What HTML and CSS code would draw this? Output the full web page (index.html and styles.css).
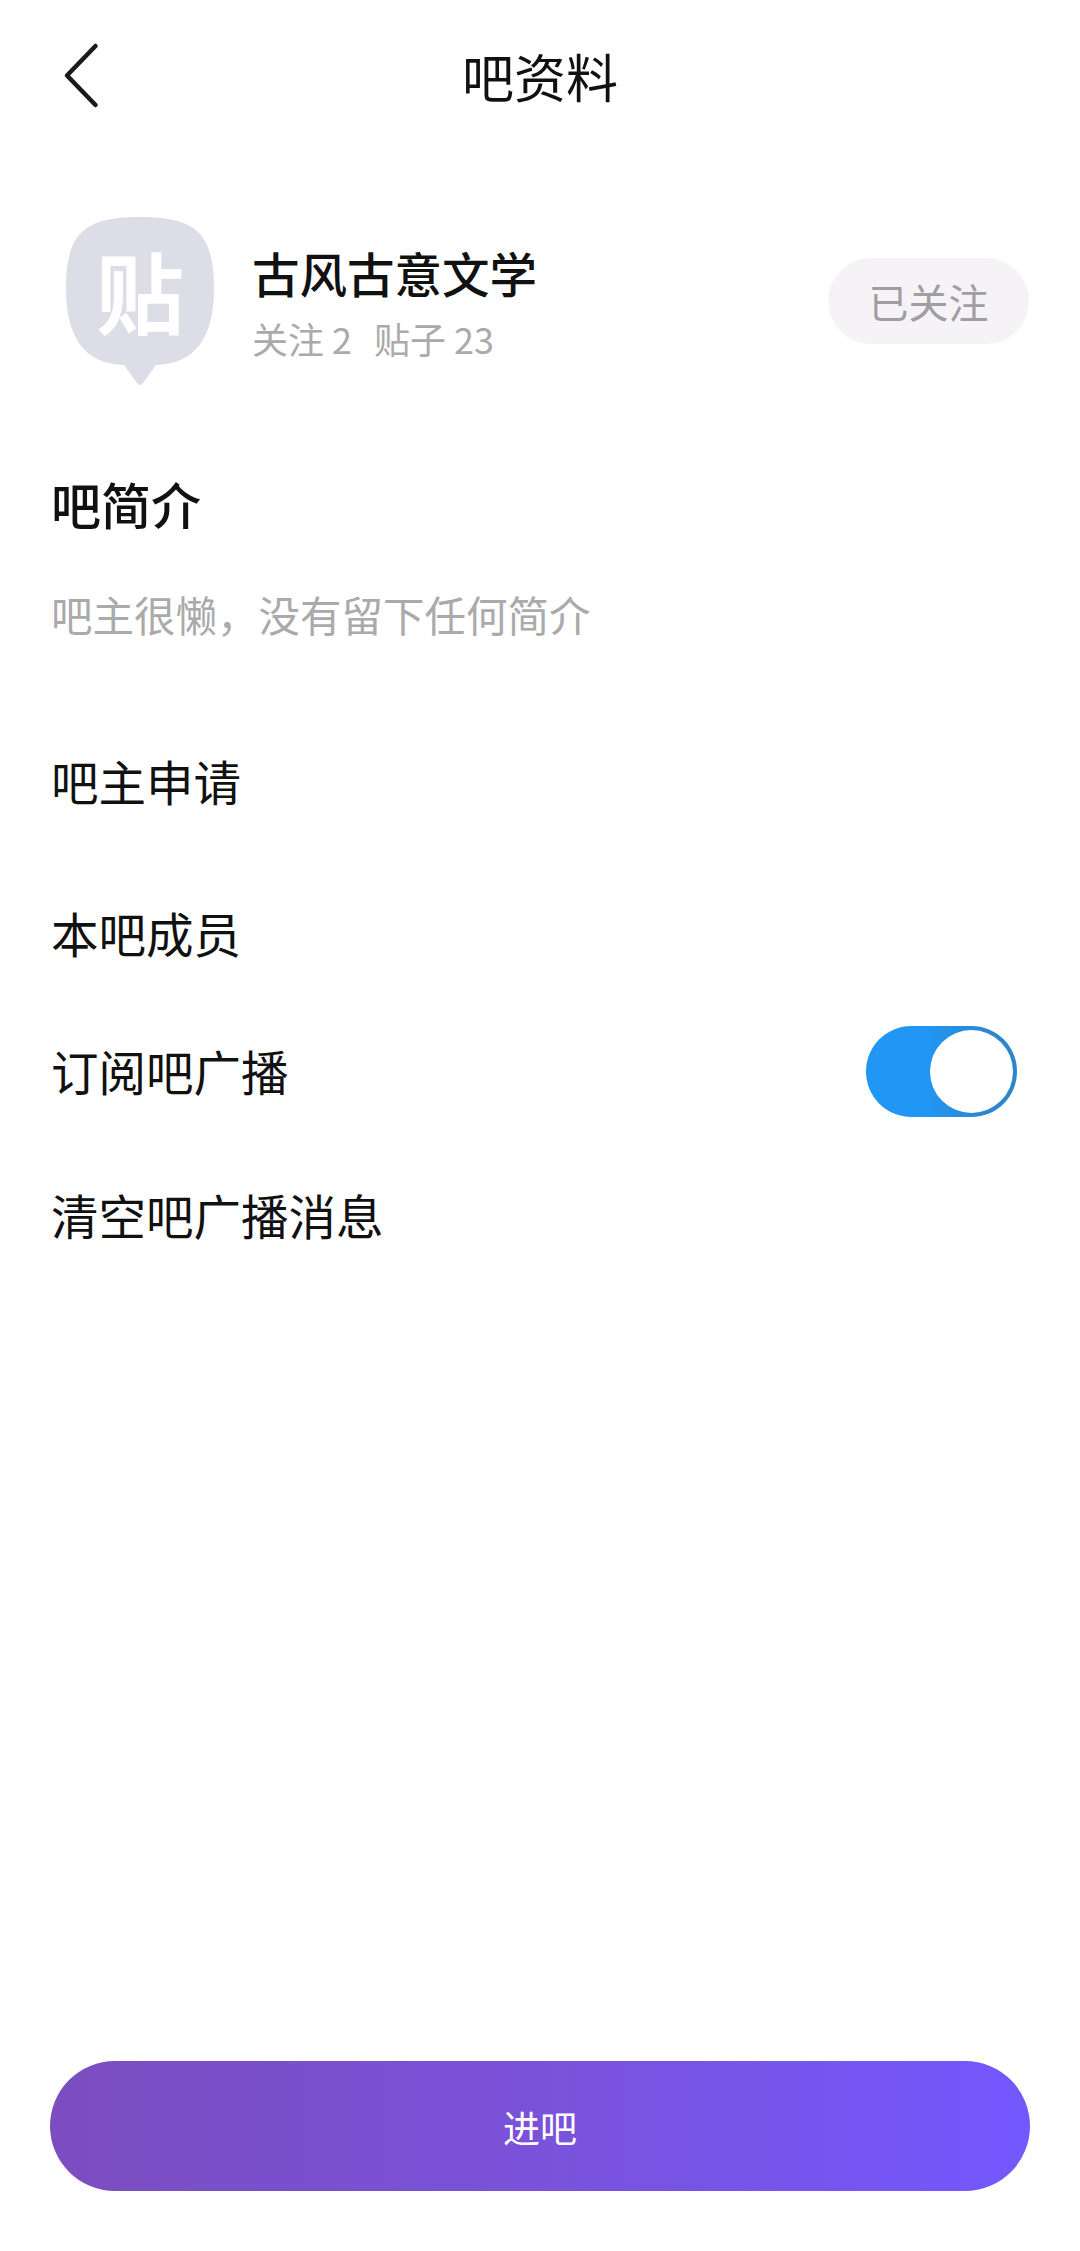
FILE: index.html
```html
<!DOCTYPE html>
<html lang="zh-CN">
<head>
    <meta charset="utf-8">
    <title>吧资料</title>
    <link rel="stylesheet" href="styles.css">
</head>
<body>
    <header class="topbar">
        <svg class="back" width="40" height="70" viewBox="0 0 40 70">
            <path d="M33.500 5 L5 34.500 L33.500 64" fill="none" stroke="#1a1a1a" stroke-width="4.500" stroke-linecap="round" stroke-linejoin="round"/>
        </svg>
        <h1 class="title">吧资料</h1>
    </header>

    <section class="profile">
        <svg class="logo" width="148" height="168" viewBox="0 0 148 168">
            <path d="M74 0 C130 0 148 16 148 72 C148 122 128 147 90 148 L77 166 Q74 170 71 166 L58 148 C20 147 0 122 0 72 C0 16 18 0 74 0 Z" fill="#dcdde6"/>
            <text class="logo-text" x="74" y="110" text-anchor="middle">贴</text>
        </svg>
        <div class="info">
            <div class="name">古风古意文学</div>
            <div class="stats"><span>关注 2</span><span>贴子 23</span></div>
        </div>
        <div class="follow">已关注</div>
    </section>

    <section class="intro">
        <h2 class="intro-title">吧简介</h2>
        <p class="intro-text">吧主很懒，没有留下任何简介</p>
    </section>

    <section class="list">
        <div class="row row-apply">吧主申请</div>
        <div class="row row-members">本吧成员</div>
        <div class="row row-sub">
            <span>订阅吧广播</span>
            <div class="switch"><div class="knob"></div></div>
        </div>
        <div class="row row-clear">清空吧广播消息</div>
    </section>

    <div class="enter">进吧</div>
</body>
</html>
```

FILE: styles.css
```css
* {
    box-sizing: border-box;
}
body {
    margin: 0;
    height: 2251px;
    background: #fff;
    color: #111;
    font-family: "Noto Sans CJK SC", "Noto Sans", sans-serif;
    display: flex;
    flex-direction: column;
    overflow: hidden;
}
.topbar {
    height: 156px;
    padding-bottom: 5px;
    position: relative;
    display: flex;
    align-items: center;
    justify-content: center;
}
.back {
    position: absolute;
    left: 62px;
    top: 41px;
}
.title {
    margin: 0;
    font-size: 52px;
    font-weight: 400;
    line-height: 70px;
}
.profile {
    margin-top: 61px;
    padding: 0 51px 0 66px;
    display: flex;
    align-items: flex-start;
}
.logo {
    flex: none;
}
.logo-text {
    font-size: 88px;
    font-weight: 700;
    fill: #fff;
}
.info {
    margin-left: 38px;
    flex: 1;
    padding-top: 24px;
}
.name {
    font-size: 47.500px;
    font-weight: 500;
    line-height: 64px;
}
.stats {
    margin-top: 9px;
    font-size: 36px;
    line-height: 48px;
    color: #aaa;
    display: flex;
    gap: 22px;
}
.follow {
    margin-top: 41px;
    width: 201px;
    height: 86px;
    border-radius: 43px;
    background: #f5f3f6;
    color: #a09ea2;
    font-size: 40px;
    display: flex;
    align-items: center;
    justify-content: center;
}
.intro {
    margin-top: 85px;
    padding: 0 51px;
}
.intro-title {
    margin: 0;
    font-size: 50px;
    font-weight: 500;
    line-height: 66px;
}
.intro-text {
    margin: 50px 0 0;
    font-size: 41.500px;
    line-height: 56px;
    color: #aaa;
}
.list {
    margin-top: 93px;
    padding: 0 52px 0 51px;
}
.row {
    font-size: 47.500px;
    line-height: 64px;
    display: flex;
    align-items: center;
    justify-content: space-between;
}
.row-apply {
    height: 92px;
}
.row-members {
    height: 92px;
    margin-top: 60px;
}
.row-sub {
    height: 92px;
    margin-top: 46px;
    padding-right: 11px;
}
.row-clear {
    height: 92px;
    margin-top: 52px;
}
.switch {
    width: 151px;
    height: 91px;
    border-radius: 46px;
    background: linear-gradient(90deg, #2196f5 40%, #2d85cc 85%);
    display: flex;
    align-items: center;
    justify-content: flex-end;
    padding-right: 4px;
}
.knob {
    width: 83px;
    height: 83px;
    border-radius: 50%;
    background: #fff;
}
.enter {
    margin: auto 50px 60px;
    padding-top: 2px;
    height: 130px;
    border-radius: 65px;
    background: linear-gradient(90deg, #7b4dbf, #7a52da 50%, #7358ff);
    color: #fff;
    font-size: 37px;
    display: flex;
    align-items: center;
    justify-content: center;
}
```
